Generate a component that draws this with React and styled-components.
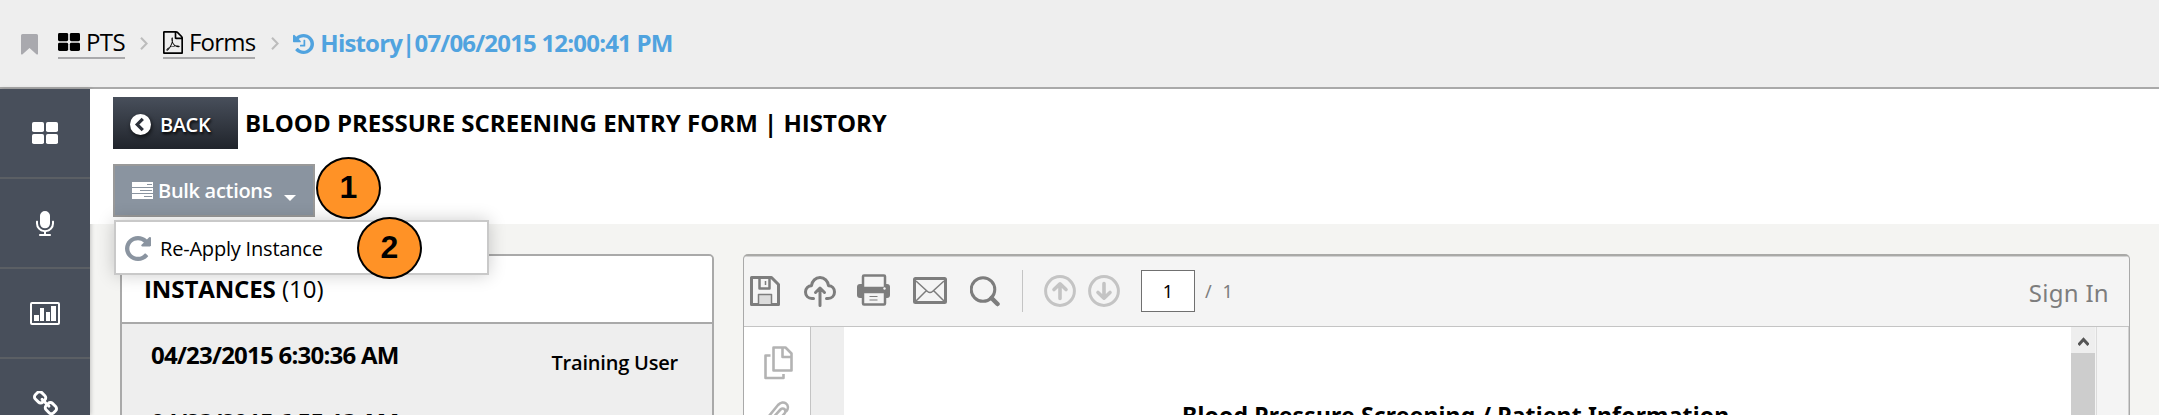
import React from 'react';
import styled, { createGlobalStyle } from 'styled-components';

const Global = createGlobalStyle`
  * { box-sizing: border-box; }
  html, body { margin: 0; height: 415px; overflow: hidden; }
  body { font-family: "Open Sans", "Noto Sans", sans-serif; color: #000; background: #f4f4f2; }
  svg { display: block; flex: none; }
`;

const Page = styled.div`
  width: 2159px;
  height: 415px;
  overflow: hidden;
  display: flex;
  flex-direction: column;
`;

const Header = styled.header`
  height: 89px;
  flex: none;
  padding: 24px 0 0 21px;
  display: flex;
  align-items: flex-start;
  background: #eee;
  border-bottom: 2px solid #a9a9a9;
`;

const Glyph = styled.span`
  display: block;
  flex: none;
  margin: ${p => p.$m || '0'};
  color: ${p => p.$color || 'inherit'};
`;

const Crumb = styled.a`
  height: 35px;
  display: flex;
  border-bottom: 2px solid #a9a9ab;
  font-size: 24px;
  line-height: 35px;
  white-space: nowrap;
  letter-spacing: ${p => p.$track || '0'};
`;

const Current = styled.span`
  display: flex;
  color: #50a3df;
  font-size: 24px;
  font-weight: 700;
  line-height: 37px;
  white-space: nowrap;
  letter-spacing: -0.81px;
`;

const Body = styled.div`
  display: flex;
  flex: 1;
  min-height: 0;
`;

const Sidebar = styled.nav`
  width: 90px;
  flex: none;
  background: #484f5b;
  box-shadow: 1px 0 4px rgba(0, 0, 0, 0.2);
`;

const NavItem = styled.div`
  height: 90px;
  display: flex;
  align-items: center;
  justify-content: center;
  border-bottom: 2px solid #5b5f64;
  color: #fff;
`;

const Main = styled.main`
  flex: 1;
  min-width: 0;
  display: flex;
  flex-direction: column;
`;

const Top = styled.section`
  height: 135px;
  flex: none;
  padding: 8px 0 0 23px;
  background: #fff;
`;

const TitleRow = styled.div`
  display: flex;
  height: 52px;
`;

const BackButton = styled.button`
  width: 125px;
  height: 52px;
  padding: 0 0 0 17px;
  border: 0;
  display: flex;
  background: linear-gradient(#484f5b, #20242b);
  color: #fff;
  font: 600 20px/55px "Open Sans", sans-serif;
  letter-spacing: -0.4px;
  text-shadow: 1px 2px 3px #000;
  svg { filter: drop-shadow(1px 2px 2px rgba(0, 0, 0, 0.7)); }
`;

const Title = styled.h1`
  margin: 0 0 0 7px;
  font-size: 24px;
  font-weight: 700;
  line-height: 52px;
  white-space: nowrap;
`;

const BulkWrap = styled.div`
  position: relative;
  width: 202px;
  margin-top: 15px;
`;

const BulkButton = styled.button`
  width: 202px;
  height: 53px;
  padding: 0 0 0 17px;
  display: flex;
  border: 2px solid #999;
  background: #8a94a0;
  color: #fff;
  font: 600 20px/50px "Open Sans", sans-serif;
  letter-spacing: -0.3px;
`;

const Menu = styled.div`
  position: absolute;
  z-index: 2;
  left: 1px;
  top: 56px;
  width: 375px;
  height: 55px;
  padding-left: 9px;
  display: flex;
  border: 2px solid #c9c9c9;
  background: #fff;
  box-shadow: 0 0 18px rgba(0, 0, 0, 0.2);
  font-size: 20px;
  line-height: 53px;
  letter-spacing: -0.2px;
  white-space: nowrap;
`;

const Step = styled.div`
  position: absolute;
  z-index: 3;
  left: ${p => p.$x}px;
  top: ${p => p.$y}px;
  width: 65px;
  height: 62px;
  border: 2px solid #000;
  border-radius: 50%;
  background: #ff9226;
  text-align: center;
  font: 700 32px/56px "Liberation Sans", Arial, sans-serif;
`;

const Content = styled.section`
  flex: 1;
  min-height: 0;
  display: flex;
  align-items: flex-start;
  gap: 29px;
  padding: 30px 0 0 30px;
`;

const Instances = styled.div`
  width: 594px;
  height: 240px;
  flex: none;
  overflow: hidden;
  background: #eee;
  border: 2px solid #a9a9a9;
  border-radius: 5px;
`;

const InstancesHead = styled.div`
  height: 68px;
  padding-left: 22px;
  border-bottom: 2px solid #a9a9a9;
  background: #fff;
  font-size: 24px;
  line-height: 66px;
  b { font-weight: 700; letter-spacing: -0.1px; }
`;

const InstanceRow = styled.div`
  height: 67px;
  padding: 0 34px 0 29px;
  display: flex;
  justify-content: space-between;
  white-space: nowrap;
`;

const Stamp = styled.span`
  font-size: 24px;
  font-weight: 700;
  line-height: 61px;
  letter-spacing: -0.76px;
`;

const User = styled.span`
  font-size: 20px;
  font-weight: 600;
  line-height: 77px;
  letter-spacing: -0.2px;
`;

const Viewer = styled.div`
  width: 1387px;
  height: 240px;
  flex: none;
  overflow: hidden;
  display: flex;
  flex-direction: column;
  border: 1px solid #a9a9a9;
  border-top: 2px solid #a9a9a7;
  border-radius: 5px;
  background: #f4f4f4;
  font-family: "Noto Sans", "Open Sans", sans-serif;
`;

const Toolbar = styled.div`
  height: 71px;
  flex: none;
  display: flex;
  align-items: flex-start;
  padding: 0 20px 0 6px;
  border-top: 1px solid #d0d0d0;
  border-bottom: 1px solid #c4c4c4;
  color: #7d7d7d;
`;

const Divider = styled.i`
  width: 1px;
  height: 42px;
  margin: 13px 21px 0 22px;
  background: #c4c4c4;
`;

const PageBox = styled.div`
  width: 54px;
  height: 42px;
  margin: 13px 0 0 21px;
  border: 1px solid #707070;
  background: #fff;
  color: #000;
  text-align: center;
  font-size: 18px;
  line-height: 40px;
`;

const PageCount = styled.span`
  margin: 13px 0 0 10px;
  font-size: 18px;
  line-height: 42px;
  word-spacing: 6px;
`;

const SignIn = styled.span`
  margin: 10px 0 0 auto;
  font-size: 24px;
  line-height: 51px;
  letter-spacing: 0.3px;
`;

const ViewerBody = styled.div`
  flex: 1;
  min-height: 0;
  display: flex;
`;

const Rail = styled.div`
  width: 67px;
  flex: none;
  padding: 19px 0 0 20px;
  background: #fff;
  border-right: 1px solid #c4c4c4;
  color: #b3b3b3;
`;

const Gutter = styled.div`
  width: 33px;
  flex: none;
  background: #eee;
`;

const Sheet = styled.div`
  width: 1227px;
  flex: none;
  padding: 72px 0 0 338px;
  background: #fff;
  font-size: 23px;
  font-weight: 700;
  line-height: 33px;
  letter-spacing: 0.14px;
  white-space: nowrap;
`;

const Scroll = styled.div`
  width: 24px;
  flex: none;
  padding: 10px 0 0 7px;
  background: linear-gradient(#eee 26px, #cdcdcd 26px);
`;

const Edge = styled.div`
  flex: 1;
  margin-left: 1px;
  border-left: 1px solid #dcdcdc;
  border-right: 1px solid #d0d0d0;
`;

const Tiles = ({ w, h }) => (
  <svg width={w} height={h} viewBox="0 0 26 22" preserveAspectRatio="none" fill="currentColor">
    <rect width="12" height="10" rx="1.8" /><rect x="14" width="12" height="10" rx="1.8" />
    <rect y="12" width="12" height="10" rx="1.8" /><rect x="14" y="12" width="12" height="10" rx="1.8" />
  </svg>
);

const Solid = ({ w, h, box, d }) => (
  <svg width={w} height={h} viewBox={box} preserveAspectRatio="none" fill="currentColor"><path d={d} /></svg>
);

const Line = ({ w, h, sw = 3, children }) => (
  <svg width={w} height={h} viewBox={`0 0 ${w} ${h}`} fill="none" stroke="currentColor" strokeWidth={sw} strokeLinejoin="round">{children}</svg>
);

const PDF = 'M1468 380q28 28 48 76t20 88v1152q0 40-28 68t-68 28h-1344q-40 0-68-28t-28-68v-1600q0-40 28-68t68-28h896q40 0 88 20t76 48zm-444-244v376h376q-10-29-22-41l-313-313q-12-12-41-22zm384 1528v-1024h-416q-40 0-68-28t-28-68v-416h-768v1536h1280zm-514-593q33 26 84 56 59-7 117-7 147 0 177 49 16 22 2 52 0 1-1 2l-2 2v1q-6 38-71 38-48 0-115-20t-130-53q-221 24-392 83-153 262-242 262-15 0-28-7l-24-12q-1-1-6-5-10-10-6-36 9-40 56-91.5t132-96.5q14-9 23 6 2 2 2 4 52-85 107-197 68-136 104-262-24-82-30.5-159.5t6.5-127.5q11-40 42-40h22q23 0 35 15 18 21 9 68-2 6-4 8 1 3 1 8v30q-2 123-14 192 55 164 146 238zm-576 411q52-24 137-158-51 40-87.5 84t-49.5 74zm398-920q-15 42-2 132 1-7 7-44 0-3 7-43 1-4 4-8-1-1-1-2t-1-2q-1-22-13-36 0 1-1 2v2zm-124 661q135-54 284-81-2-1-13-9.5t-16-13.5q-76-67-127-176-27 86-83 197-30 56-45 83zm646-16q-24-24-140-24 76 28 124 28 14 0 18-1 0-1-2-3z';
const HISTORY = 'M1664 896q0 156-61 298t-164 245-245 164-298 61q-172 0-327-72.5t-264-204.5q-7-10-6.5-22.5t8.5-20.5l137-138q10-9 25-9 16 2 23 12 73 95 179 147t225 52q104 0 198.5-40.5t163.5-109.5 109.5-163.5 40.5-198.5-40.5-198.5-109.5-163.5-163.5-109.5-198.5-40.5q-98 0-188 35.5t-160 101.5l137 138q31 30 14 69-17 40-59 40h-448q-26 0-45-19t-19-45v-448q0-42 40-59 39-17 69 14l130 129q107-101 244.5-156.5t284.5-55.5q156 0 298 61t245 164 164 245 61 298zm-640-288v448q0 14-9 23t-23 9h-320q-14 0-23-9t-9-23v-64q0-14 9-23t23-9h224v-352q0-14 9-23t23-9h64q14 0 23 9t9 23z';
const MIC = 'M1472 704v128q0 221-147.5 384.5t-364.5 187.5v132h256q26 0 45 19t19 45-19 45-45 19h-640q-26 0-45-19t-19-45 19-45 45-19h256v-132q-217-24-364.5-187.5t-147.5-384.5v-128q0-26 19-45t45-19 45 19 19 45v128q0 185 131.5 316.5t316.5 131.5 316.5-131.5 131.5-316.5v-128q0-26 19-45t45-19 45 19 19 45zm-256-384v512q0 132-94 226t-226 94-226-94-94-226v-512q0-132 94-226t226-94 226 94 94 226z';
const LINK = 'M1520 1216q0-40-28-68l-208-208q-28-28-68-28-42 0-72 32 3 3 19 18.5t21.5 21.5 15 19 13 25.5 3.5 27.5q0 40-28 68t-68 28q-15 0-27.5-3.5t-25.5-13-19-15-21.5-21.5-18.5-19q-33 31-33 73 0 40 28 68l206 207q27 27 68 27 40 0 68-26l147-146q28-28 28-67zm-703-705q0-40-28-68l-206-207q-28-28-68-28-39 0-68 27l-147 146q-28 28-28 67 0 40 28 68l208 208q27 27 68 27 42 0 72-31-3-3-19-18.5t-21.5-21.5-15-19-13-25.5-3.5-27.5q0-40 28-68t68-28q15 0 27.5 3.5t25.5 13 19 15 21.5 21.5 18.5 19q33-31 33-73zm895 705q0 120-85 203l-147 146q-83 83-203 83-121 0-204-85l-206-207q-83-83-83-203 0-123 88-209l-88-88q-86 88-208 88-120 0-204-84l-208-208q-84-84-84-204t85-203l147-146q83-83 203-83 121 0 204 85l206 207q83 83 83 203 0 123-88 209l88 88q86-88 208-88 120 0 204 84l208 208q84 84 84 204z';
const REPEAT = 'M1664 256v448q0 26-19 45t-45 19h-448q-42 0-59-40-17-39 14-69l138-138q-148-137-349-137-104 0-198.5 40.5t-163.5 109.5-109.5 163.5-40.5 198.5 40.5 198.5 109.5 163.5 163.5 109.5 198.5 40.5q119 0 225-52t179-147q7-10 23-12 15 0 25 9l137 138q9 8 9.5 20.5t-7.5 22.5q-109 132-264 204.5t-327 72.5q-156 0-298-61t-245-164-164-245-61-298 61-298 164-245 245-164 298-61q147 0 284.5 55.5t244.5 156.5l130-129q29-31 70-14 39 17 39 59z';

const Chevron = () => (
  <svg width="8" height="13" viewBox="0 0 8 13" fill="none" stroke="#bcbcbc" strokeWidth="2"><path d="M1 .7 6.6 6.5 1 12.3" /></svg>
);

const Arrow = ({ down }) => (
  <svg width="32" height="32" viewBox="0 0 32 32" fill="none" stroke="#c4c4c4" strokeWidth="3" strokeLinecap="round">
    <circle cx="16" cy="16" r="14.4" />
    <g transform={down ? 'rotate(180 16 16)' : undefined}><path strokeWidth="3.6" strokeLinejoin="round" d="M16 23.5V9M10 14.5 16 8.8l6 5.7" /></g>
  </svg>
);

export default function App() {
  return (
    <Page>
      <Global />
      <Header>
        <Glyph $m="10px 20px 0 0">
          <svg width="17" height="21" viewBox="0 0 17 21" fill="#a9a9ae"><path d="M1.5 0h14Q17 0 17 1.5V20q-.6 1-1.6.3L8.5 14 1.6 20.3Q.6 21 0 20V1.500Q0 0 1.500 0z" /></svg>
        </Glyph>
        <Crumb $track="-0.6px">
          <Glyph $m="9px 6px 0 0"><Tiles w={22} h={18} /></Glyph>PTS
        </Crumb>
        <Glyph $m="13px 15px 0 15px"><Chevron /></Glyph>
        <Crumb $track="-0.8px">
          <Glyph $m="7px 6px 0 0"><Solid w={20} h={23} box="0 0 1536 1792" d={PDF} /></Glyph>Forms
        </Crumb>
        <Glyph $m="13px 14px 0 16px"><Chevron /></Glyph>
        <Current>
          <Glyph $m="10px 6px 0 0"><Solid w={21} h={20} box="128 128 1536 1536" d={HISTORY} /></Glyph>
          History|07/06/2015 12:00:41 PM
        </Current>
      </Header>
      <Body>
        <Sidebar>
          <NavItem><Tiles w={26} h={22} /></NavItem>
          <NavItem><Solid w={18} h={25} box="320 0 1152 1664" d={MIC} /></NavItem>
          <NavItem>
            <svg width="30" height="23" viewBox="0 0 30 23">
              <rect x="1" y="1" width="28" height="21" rx="1" fill="none" stroke="#fff" strokeWidth="2" />
              <path fill="#fff" d="M4 13h5v6H4zM10 6h4v13h-4zM16 10h4v9h-4zM21 4h5v15h-5z" />
            </svg>
          </NavItem>
          <NavItem><Solid w={25} h={25} box="80 64 1632 1632" d={LINK} /></NavItem>
        </Sidebar>
        <Main>
          <Top>
            <TitleRow>
              <BackButton>
                <Glyph $m="17px 9px 0 0">
                  <svg width="21" height="21" viewBox="0 0 21 21"><circle cx="10.500" cy="10.500" r="10.500" fill="#fff" /><path d="M12.800 4.800 7.200 10.500l5.600 5.700" fill="none" stroke="#2c313a" strokeWidth="3.200" /></svg>
                </Glyph>
                BACK
              </BackButton>
              <Title>BLOOD PRESSURE SCREENING ENTRY FORM | HISTORY</Title>
            </TitleRow>
            <BulkWrap>
              <BulkButton>
                <Glyph $m="16px 5px 0 0">
                  <svg width="21" height="17" viewBox="0 0 21 17">
                    <path fill="#fff" d="M0 0h21v5H0zM0 6h21v5H0zM0 12h21v5H0z" />
                    <path stroke="#8a94a0" d="M15 2.500h5M8 8.500h12M12 14.500h8" />
                  </svg>
                </Glyph>
                Bulk actions
                <Glyph $m="29px 0 0 12px">
                  <svg width="12" height="6" viewBox="0 0 12 6" fill="#fff"><path d="M0 0h12L6 6z" /></svg>
                </Glyph>
              </BulkButton>
              <Menu>
                <Glyph $m="14px 9px 0 0" $color="#8a94a0"><Solid w={26} h={25} box="128 128 1536 1536" d={REPEAT} /></Glyph>
                Re-Apply Instance
              </Menu>
              <Step $x={203} $y={-7}>1</Step>
              <Step $x={244} $y={53}>2</Step>
            </BulkWrap>
          </Top>
          <Content>
            <Instances>
              <InstancesHead><b>INSTANCES</b> (10)</InstancesHead>
              <InstanceRow><Stamp>04/23/2015 6:30:36 AM</Stamp><User>Training User</User></InstanceRow>
              <InstanceRow><Stamp>04/23/2015 6:55:13 AM</Stamp><User>Training User</User></InstanceRow>
            </Instances>
            <Viewer>
              <Toolbar>
                <Glyph $m="19px 24px 0 0">
                  <Line w={30} h={30}><path d="M1.500 1.500h20l7 7v20h-27z" /><path d="M9.500 2v10.500h10V2" strokeWidth="2.500" /><path d="M15.500 5v4" strokeWidth="1.500" /><path d="M8.500 28V18.500h13V28" fill="#dcdcdc" strokeWidth="1.500" /></Line>
                </Glyph>
                <Glyph $m="19px 21px 0 0">
                  <Line w={32} h={31}><path strokeLinecap="round" d="M9.500 22.500H8C4 22.500 1.500 19.500 1.500 16s2.700-6.300 6-6.300C8 5 11.500 1.500 16 1.500s8 3.500 8.500 8.200c3.500 0 6 2.800 6 6.300s-2.500 6.500-6.500 6.500h-1.500M16 29.500V12.500M11.500 16.500 16 12l4.500 4.500" /></Line>
                </Glyph>
                <Glyph $m="17px 23px 0 0">
                  <Line w={33} h={32}><path fill="currentColor" stroke="none" d="M3 10h27q3 0 3 3v8q0 3-3 3H3q-3 0-3-3v-8q0-3 3-3z" /><rect x="6" y="1.500" width="22" height="12.500" rx="1" fill="#f4f4f4" strokeWidth="2.500" /><path d="M6 13h22v5H6z" fill="currentColor" stroke="none" /><rect x="6" y="18" width="22" height="12.500" rx="1" fill="#f4f4f4" strokeWidth="2.500" /><path d="M12.500 22.500h8M12.500 26h8" strokeWidth="1.200" /><circle cx="27.500" cy="14.500" r="1.200" fill="#f4f4f4" stroke="none" /></Line>
                </Glyph>
                <Glyph $m="20px 23px 0 0">
                  <Line w={34} h={27}><rect x="1.500" y="1.500" width="31" height="24" rx="1" /><path strokeWidth="1.500" d="M3 4 14.500 14.500q2.500 2 5 0L31 4M3 24l10-10M31 24 21 14" /></Line>
                </Glyph>
                <Glyph $m="19px 0 0 0">
                  <Line w={30} h={31}><circle cx="13" cy="13.500" r="11.800" /><path d="M21.500 22 27.500 28" strokeWidth="4.500" strokeLinecap="round" /></Line>
                </Glyph>
                <Divider />
                <Glyph $m="18px 12px 0 0"><Arrow /></Glyph>
                <Glyph $m="18px 0 0 0"><Arrow down /></Glyph>
                <PageBox>1</PageBox>
                <PageCount>/ 1</PageCount>
                <SignIn>Sign In</SignIn>
              </Toolbar>
              <ViewerBody>
                <Rail>
                  <Line w={30} h={34} sw={2.6}><path d="M9.500 1.500h12l6 6v17h-18zM18.500 2v9h9" /><path d="M6.500 9.500h-5v22.500h18V28" /></Line>
                  <Glyph $m="20px 0 0 -5px">
                    <Line w={34} h={36} sw={2.6}><path strokeLinecap="round" d="m11 21 10.500-11.500c3-3 6.500 1 4 4L13 28c-5 5-12-1-7.500-6.500L19 5c5.500-6 13 0 8.500 6" /></Line>
                  </Glyph>
                </Rail>
                <Gutter />
                <Sheet>Blood Pressure Screening / Patient Information</Sheet>
                <Scroll>
                  <svg width="11" height="9" viewBox="0 0 11 9" fill="none" stroke="#555" strokeWidth="3"><path d="M.500 8 5.500 2.500l5 5.500" /></svg>
                </Scroll>
                <Edge />
              </ViewerBody>
            </Viewer>
          </Content>
        </Main>
      </Body>
    </Page>
  );
}
